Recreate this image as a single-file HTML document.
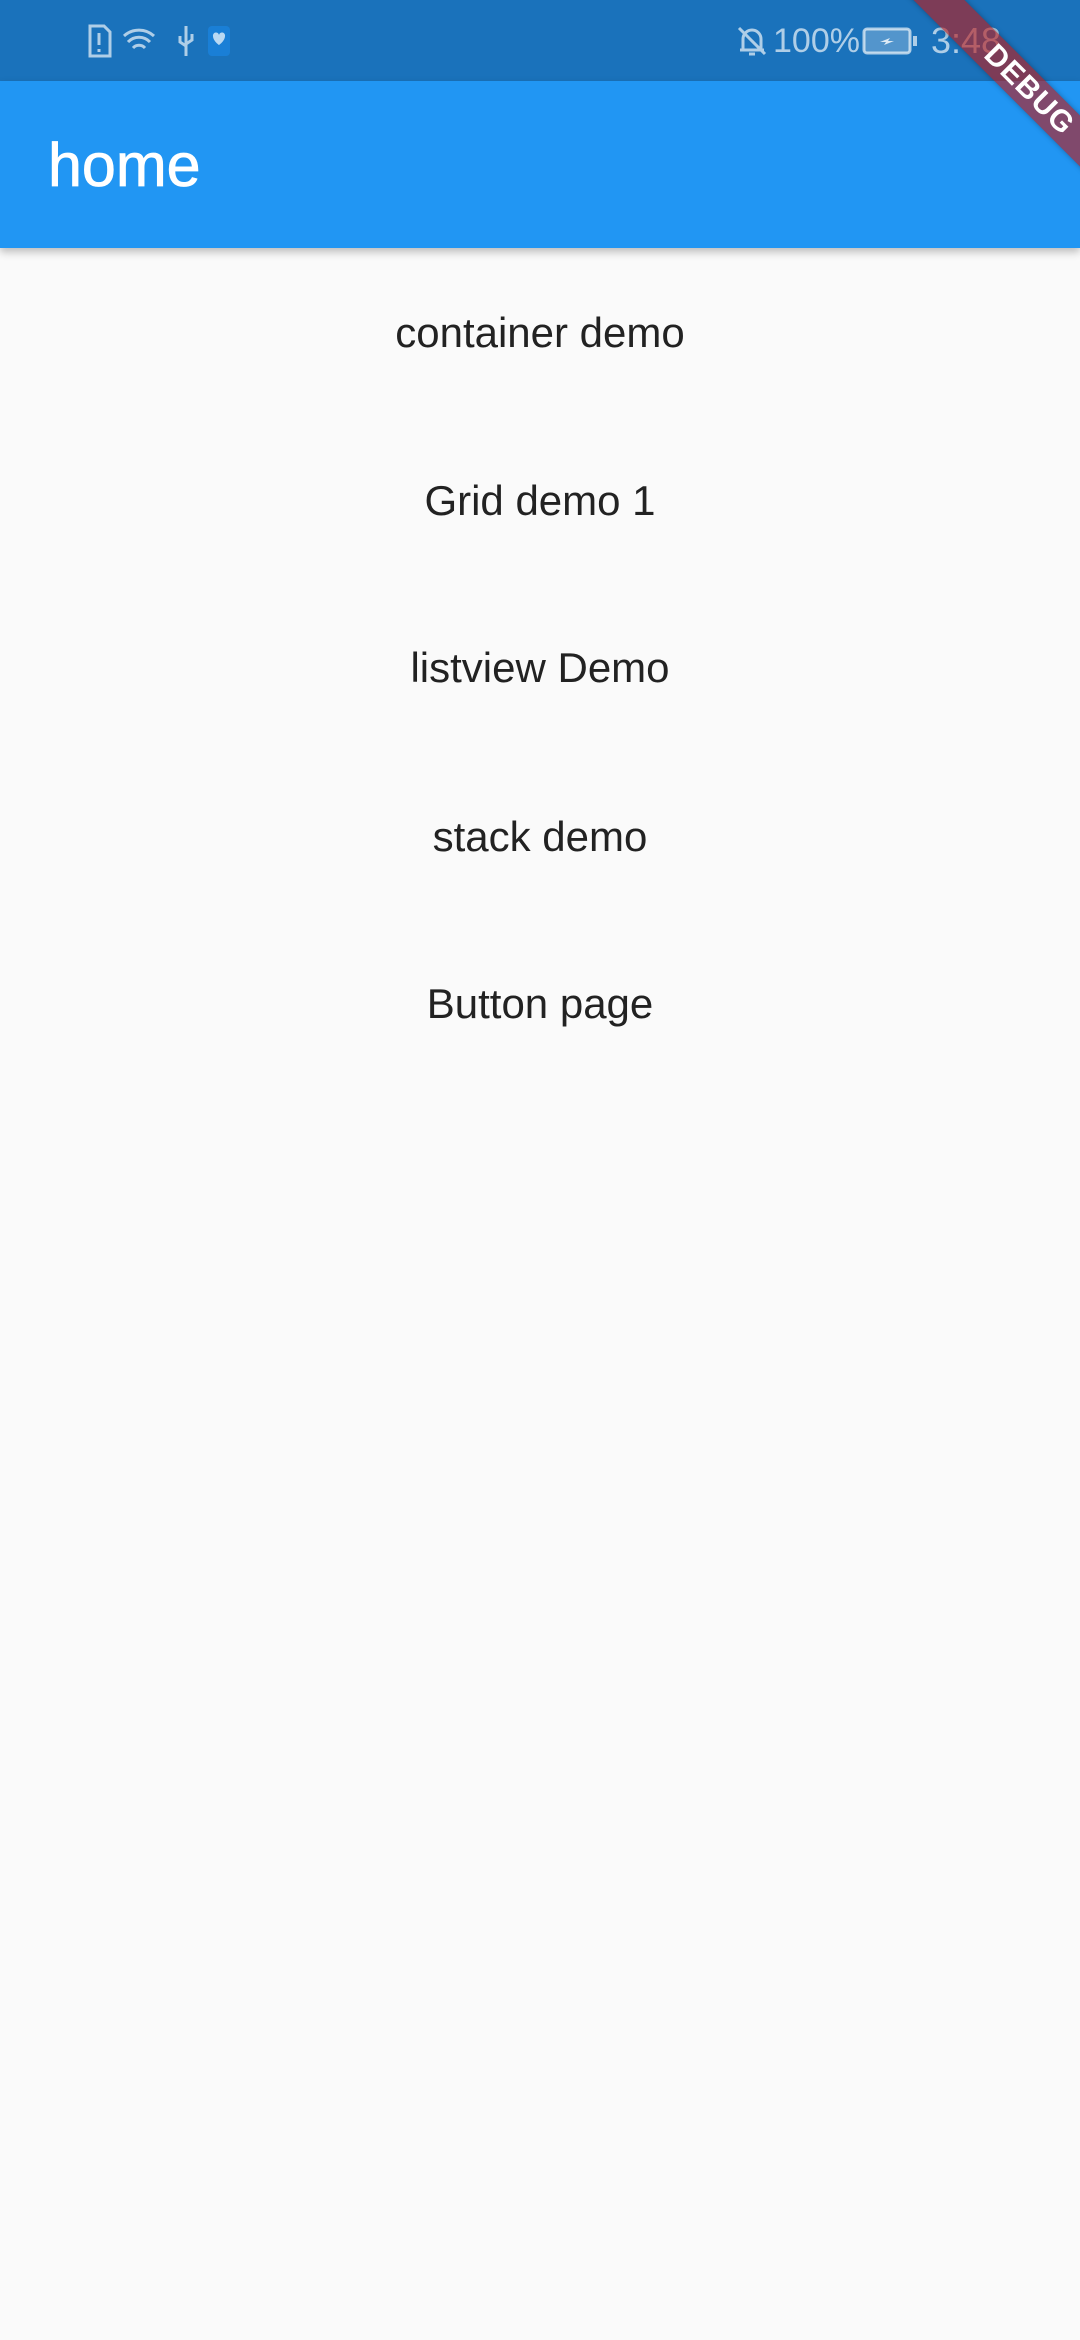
<!DOCTYPE html>
<html><head><meta charset="utf-8"><style>
body{margin:0;width:1080px;height:2340px;background:#fafafa;position:relative;overflow:hidden;font-family:"Liberation Sans",sans-serif}
#sb{position:absolute;left:0;top:0;width:1080px;height:81px;background:#1a72bb}
#ab{position:absolute;left:0;top:81px;width:1080px;height:167px;background:#2196f3;box-shadow:0 4px 8px rgba(0,0,0,.25)}
#ab span{position:absolute;left:48px;top:50px;font-size:61px;color:#fff;line-height:68px;-webkit-text-stroke:0.8px #fff}
.it{position:absolute;left:0;width:1080px;text-align:center;font-size:42px;color:#222;line-height:60px}
.st{position:absolute;color:rgba(255,255,255,.65);font-size:34px;top:21px;line-height:40px}
#ban{position:absolute;width:400px;height:36px;left:829px;top:72px;transform:rotate(45deg);background:rgba(183,28,28,.63);color:#fff;font-weight:bold;font-size:30px;line-height:36px;text-align:center;box-shadow:0 0 6px rgba(0,0,0,.3);letter-spacing:1px}
</style></head><body>
<div id="sb">
<svg style="position:absolute;left:88px;top:24px" width="160" height="34" viewBox="0 0 160 34" fill="none" stroke="rgba(255,255,255,.65)" stroke-width="3">
<path d="M2 2h14l6 6v24H2z"/><path d="M11 9v12M11 25v3"/>
<path d="M36 12a22 22 0 0 1 30 0M40 18a15 15 0 0 1 22 0M45 24a8 8 0 0 1 12 0"/>
<path d="M98 2v30M92 12v6l6 4M104 10v6l-6 4"/>
<rect x="120" y="2" width="22" height="30" rx="4" fill="#1a7fd6" stroke="none"/>
<path d="M125 12a3 3 0 0 1 6-1a3 3 0 0 1 6 1c0 5-6 9-6 9s-6-4-6-9z" fill="rgba(255,255,255,.7)" stroke="none"/>
</svg>
<svg style="position:absolute;left:735px;top:24px" width="34" height="34" viewBox="0 0 34 34" fill="none" stroke="rgba(255,255,255,.65)" stroke-width="3"><path d="M8 26V15a9 9 0 0 1 18 0v11h3H5M14 30h6M4 4l26 26"/></svg>
<span class="st" style="left:773px">100%</span>
<svg style="position:absolute;left:862px;top:27px" width="56" height="28" viewBox="0 0 56 28"><rect x="2" y="2" width="46" height="24" rx="3" fill="rgba(255,255,255,.25)" stroke="rgba(255,255,255,.65)" stroke-width="3"/><rect x="51" y="9" width="4" height="10" fill="rgba(255,255,255,.65)"/><path d="M18 15l10-4-2 3h6l-10 4 2-3z" fill="rgba(255,255,255,.8)"/></svg>
<span class="st" style="left:931px;font-size:36px">3:48</span>
</div>
<div id="ab"><span>home</span></div>
<div class="it" style="top:303px">container demo</div>
<div class="it" style="top:471px">Grid demo 1</div>
<div class="it" style="top:638px">listview Demo</div>
<div class="it" style="top:807px">stack demo</div>
<div class="it" style="top:974px">Button page</div>
<div id="ban">DEBUG</div>
</body></html>
